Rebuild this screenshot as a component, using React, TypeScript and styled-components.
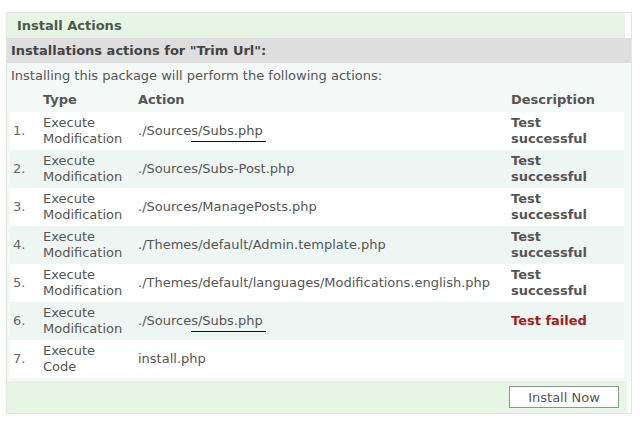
import styled, { createGlobalStyle } from 'styled-components';

const GlobalStyle = createGlobalStyle`
    body {
        margin: 0;
        background: #ffffff;
        font-family: "DejaVu Sans", Verdana, sans-serif;
        color: #555555;
    }
`

type Row = {
    type: string[];
    action: string;
    underline?: [string, string];
    result?: string;
    failed?: boolean;
};

const rows: Row[] = [
    { type: ['Execute', 'Modification'], action: './Sources/Subs.php', underline: ['./Source', 's/Subs.php'], result: 'Test successful' },
    { type: ['Execute', 'Modification'], action: './Sources/Subs-Post.php', result: 'Test successful' },
    { type: ['Execute', 'Modification'], action: './Sources/ManagePosts.php', result: 'Test successful' },
    { type: ['Execute', 'Modification'], action: './Themes/default/Admin.template.php', result: 'Test successful' },
    { type: ['Execute', 'Modification'], action: './Themes/default/languages/Modifications.english.php', result: 'Test successful' },
    { type: ['Execute', 'Modification'], action: './Sources/Subs.php', underline: ['./Source', 's/Subs.php'], result: 'Test failed', failed: true },
    { type: ['Execute', 'Code'], action: 'install.php' },
];

const App = () => {
    return (
        <>
            <GlobalStyle />
            <Panel>
                <TitleBar>Install Actions</TitleBar>
                <SubTitle>Installations actions for "Trim Url":</SubTitle>
                <Body>
                    <Intro>Installing this package will perform the following actions:</Intro>
                    <ActionTable>
                        <colgroup>
                            <col style={{ width: 30 }} />
                            <col style={{ width: 95 }} />
                            <col style={{ width: 373 }} />
                            <col />
                        </colgroup>
                        <thead>
                            <tr>
                                <HeadCell></HeadCell>
                                <HeadCell>Type</HeadCell>
                                <HeadCell>Action</HeadCell>
                                <HeadCell>Description</HeadCell>
                            </tr>
                        </thead>
                        <tbody>
                            {rows.map((row, i) => (
                                <TableRow key={i} alt={i % 2 === 1}>
                                    <NumberCell>{i + 1}.</NumberCell>
                                    <Cell>
                                        {row.type.map((t) => <div key={t}>{t}</div>)}
                                    </Cell>
                                    <Cell>
                                        {row.underline
                                            ? <>{row.underline[0]}<Marked>{row.underline[1]}</Marked></>
                                            : row.action}
                                    </Cell>
                                    <ResultCell failed={row.failed}>
                                        <ResultText>{row.result}</ResultText>
                                    </ResultCell>
                                </TableRow>
                            ))}
                        </tbody>
                    </ActionTable>
                </Body>
                <Footer>
                    <InstallButton>Install Now</InstallButton>
                </Footer>
            </Panel>
        </>
    )
}

const Panel = styled.div`
    margin: 12px 0 0 6px;
    width: 624px;
    border: 1px solid #dfe7df;
    background: #ffffff;
`

const TitleBar = styled.div`
    height: 25px;
    line-height: 25px;
    margin-right: 6px;
    padding-left: 10px;
    background: #e6f5e4;
    font-size: 13px;
    font-weight: bold;
    color: #4c5a4c;
`

const SubTitle = styled.div`
    height: 25px;
    line-height: 25px;
    padding-left: 4px;
    background: #dedede;
    font-size: 13px;
    font-weight: bold;
    color: #444444;
`

const Body = styled.div`
    background: #f4f9f8;
    padding: 5px 3px 3px 3px;
`

const Intro = styled.div`
    font-size: 13px;
    line-height: 16px;
    padding-left: 1px;
    color: #555555;
`

const ActionTable = styled.table`
    width: 614px;
    border-collapse: collapse;
    font-size: 13px;
`

const HeadCell = styled.th`
    text-align: left;
    font-weight: bold;
    color: #555555;
    height: 28px;
    padding: 3px 0 0 3px;
    vertical-align: middle;
    box-sizing: border-box;
`

const TableRow = styled.tr<{ alt?: boolean }>`
    height: 38px;
    background: ${(p) => (p.alt ? '#eef6f3' : '#ffffff')};
`

const Cell = styled.td`
    padding: 0 0 0 3px;
    line-height: 16px;
    vertical-align: middle;
    color: #555555;
`

const NumberCell = styled(Cell)`
    color: #666666;
`

const ResultCell = styled(Cell)<{ failed?: boolean }>`
    font-weight: bold;
    color: ${(p) => (p.failed ? '#a51b1b' : '#555555')};
`

const ResultText = styled.div`
    max-width: 100px;
`

const Marked = styled.span`
    display: inline-block;
    border-bottom: 1.5px solid #111111;
    padding-right: 3px;
    line-height: 16px;
    padding-bottom: 2px;
    margin-bottom: -4px;
`

const Footer = styled.div`
    height: 32px;
    background: #e6f5e4;
    margin-right: 4px;
    display: flex;
    align-items: center;
    justify-content: flex-end;
    padding-right: 8px;
`

const InstallButton = styled.button`
    width: 110px;
    height: 22px;
    background: #ffffff;
    border: 1px solid #8a9a8a;
    font-family: "DejaVu Sans", Verdana, sans-serif;
    font-size: 13px;
    color: #555555;
    padding: 0;
`

export default App;
